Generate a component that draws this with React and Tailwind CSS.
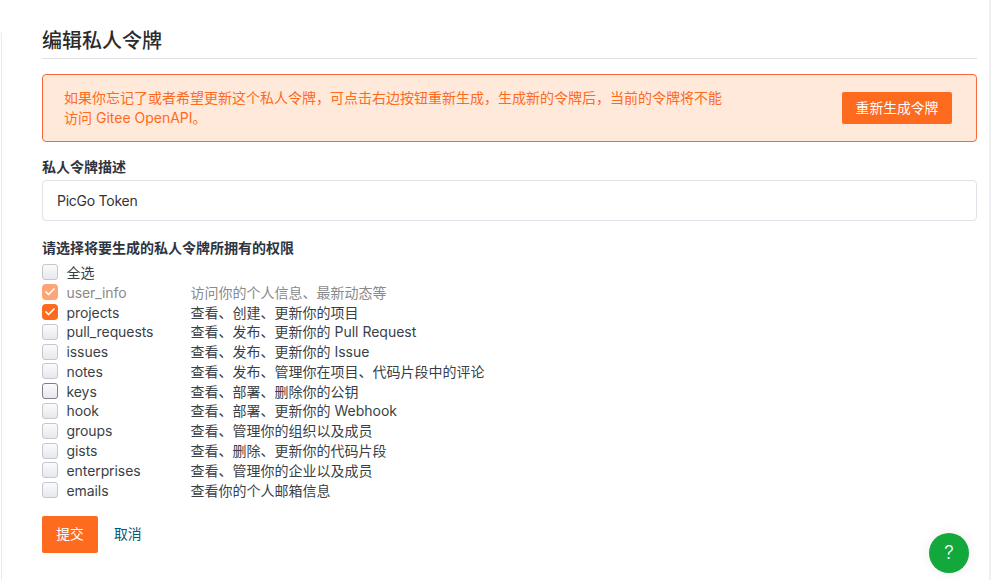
import { Check } from "lucide-react";

const scopes = [
  { name: "全选", desc: "" },
  { name: "user_info", desc: "访问你的个人信息、最新动态等", checked: true, disabled: true },
  { name: "projects", desc: "查看、创建、更新你的项目", checked: true },
  { name: "pull_requests", desc: "查看、发布、更新你的 Pull Request" },
  { name: "issues", desc: "查看、发布、更新你的 Issue" },
  { name: "notes", desc: "查看、发布、管理你在项目、代码片段中的评论" },
  { name: "keys", desc: "查看、部署、删除你的公钥", focused: true },
  { name: "hook", desc: "查看、部署、更新你的 Webhook" },
  { name: "groups", desc: "查看、管理你的组织以及成员" },
  { name: "gists", desc: "查看、删除、更新你的代码片段" },
  { name: "enterprises", desc: "查看、管理你的企业以及成员" },
  { name: "emails", desc: "查看你的个人邮箱信息" },
];

function Box({ checked, disabled, focused }) {
  if (checked) {
    return (
      <div className={`w-4 h-4 rounded-[4px] bg-[#fe6a1e] flex items-center justify-center ${disabled ? "opacity-60" : ""}`}>
        <Check className="w-3 h-3 text-white" strokeWidth={3.5} />
      </div>
    );
  }
  return (
    <div
      className={`w-4 h-4 rounded-[3px] border bg-gradient-to-b from-[#fbfbfc] to-[#e6e8ec] ${
        focused ? "border-[#7d8088]" : "border-[#c4c7cc]"
      }`}
    />
  );
}

export default function App() {
  return (
    <div className="relative h-[580px] w-full flex bg-white overflow-hidden text-[14px] text-[#2e3440] font-['Inter','Noto_Sans_CJK_SC',sans-serif]">
      <div className="w-[2px] mt-[32px] border-t border-r border-[#e8eaee] rounded-tr-[3px] shrink-0" />

      <main className="flex-1 pl-[40px] pr-[12px] pt-[28px]">
        <h1 className="h-[31px] border-b border-[#dfe1e6] text-[20px] leading-[26px] font-medium text-[#2b2b2b]">
          编辑私人令牌
        </h1>

        <div className="mt-[15px] h-[68px] flex items-center justify-between pl-[21px] pr-[24px] border border-[#f7693a] rounded-[4px] bg-[#ffe9da] text-[#fe6a1e]">
          <p className="w-[660px] leading-[20px] mb-[1px]">
            如果你忘记了或者希望更新这个私人令牌，可点击右边按钮重新生成，生成新的令牌后，当前的令牌将不能访问 Gitee OpenAPI。
          </p>
          <button className="w-[110px] h-[32px] rounded-[2px] bg-[#fe6a1e] text-white text-[13.8px]">
            重新生成令牌
          </button>
        </div>

        <label className="block mt-[16px] h-[22px] leading-[18px] font-semibold text-[#2e3440]">
          私人令牌描述
        </label>
        <div className="h-[41px] flex items-center px-[14px] border border-[#dfe2e8] rounded-[4px] text-[#333] tracking-[-0.25px]">
          PicGo Token
        </div>

        <label className="block mt-[18px] h-[23.5px] leading-[18px] font-semibold text-[#2e3440]">
          请选择将要生成的私人令牌所拥有的权限
        </label>

        <div className="flex flex-col">
          {scopes.map((s) => (
            <div key={s.name} className={`h-[19.8px] flex items-center ${s.disabled ? "text-[#8a8a8a]" : "text-[#3a3f47]"}`}>
              <Box checked={s.checked} disabled={s.disabled} focused={s.focused} />
              <span className="ml-[8.5px] w-[124px] tracking-[-0.08px]">{s.name}</span>
              <span>{s.desc}</span>
            </div>
          ))}
        </div>

        <div className="mt-[16px] flex items-center">
          <button className="w-[56px] h-[37px] rounded-[2px] bg-[#fe6a1e] text-white text-[13.8px]">提交</button>
          <a className="ml-[16px] text-[13.8px] text-[#005980]">取消</a>
        </div>
      </main>

      <div className="w-[2px] bg-[#f0f0f2] shrink-0" />

      <button className="absolute left-[929px] top-[533px] w-10 h-10 rounded-full bg-[#12a83c] text-white text-[19px] font-light shadow-[0_0_12px_rgba(0,0,0,0.08)] flex items-center justify-center">
        ?
      </button>
    </div>
  );
}
